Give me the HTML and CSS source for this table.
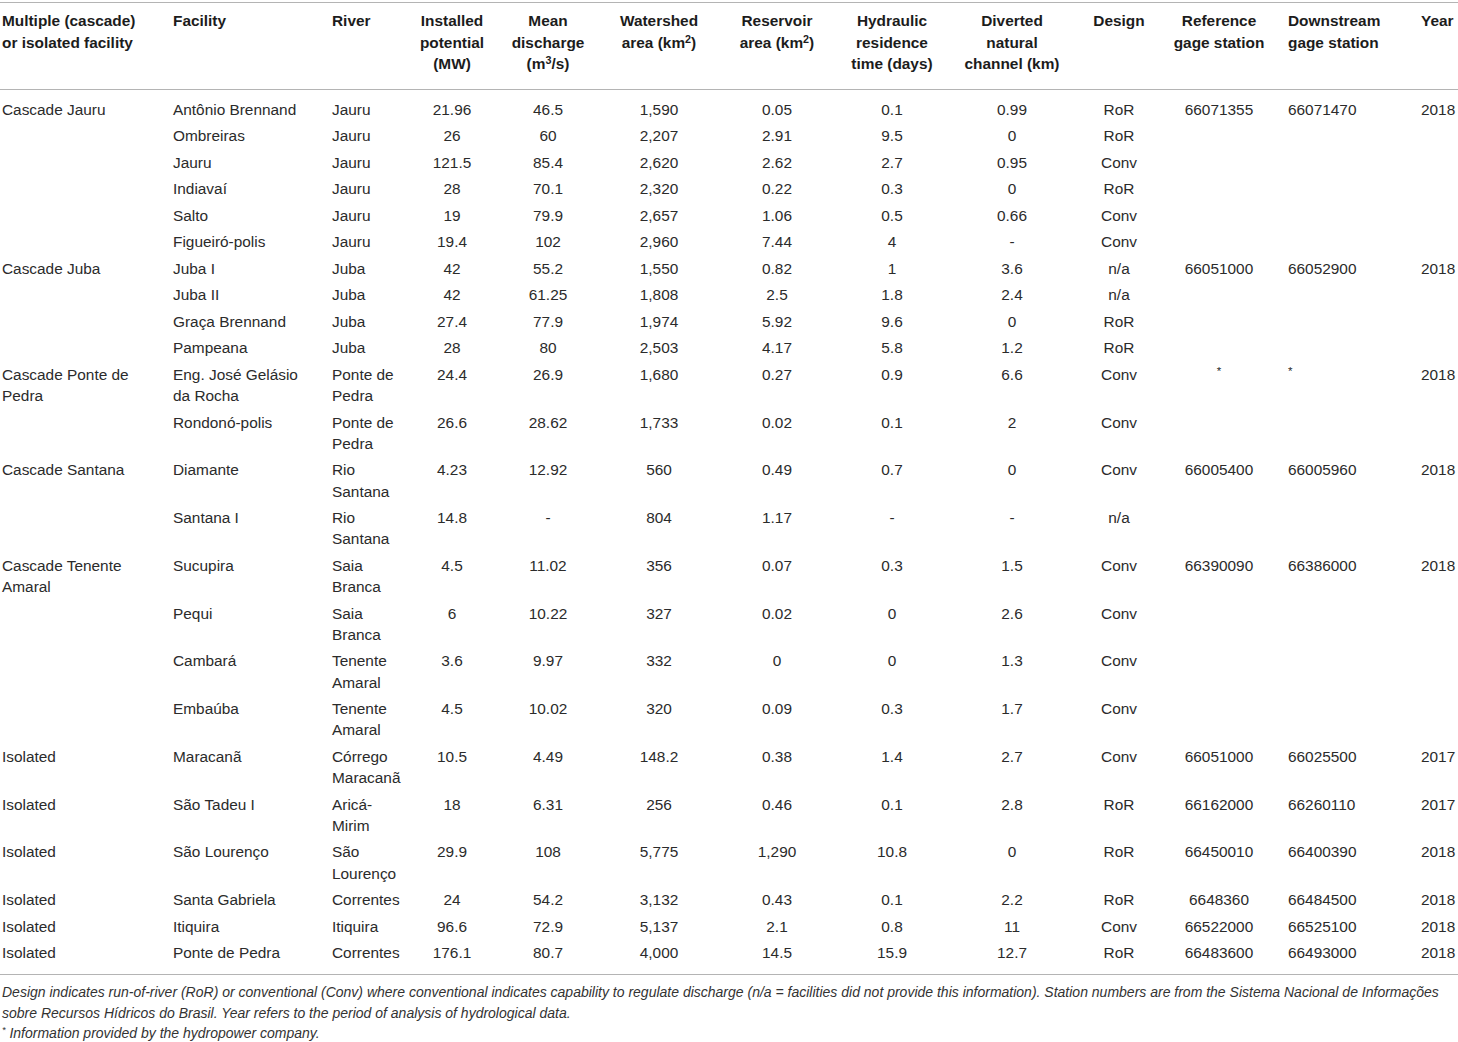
FILE: index.html
```html
<!DOCTYPE html>
<html lang="en">
<head>
<meta charset="utf-8">
<title>Hydropower facilities</title>
<link rel="stylesheet" href="styles.css">
</head>
<body>
<table class="data">
  <colgroup>
    <col class="c1"><col class="c2"><col class="c3"><col class="c4"><col class="c5"><col class="c6"><col class="c7"><col class="c8"><col class="c9"><col class="c10"><col class="c11"><col class="c12"><col class="c13">
  </colgroup>
  <thead>
    <tr>
      <th>Multiple (cascade) or isolated facility</th>
      <th>Facility</th>
      <th>River</th>
      <th>Installed potential (MW)</th>
      <th>Mean discharge (m<sup>3</sup>/s)</th>
      <th>Watershed area (km<sup>2</sup>)</th>
      <th>Reservoir area (km<sup>2</sup>)</th>
      <th>Hydraulic residence time (days)</th>
      <th>Diverted natural channel (km)</th>
      <th>Design</th>
      <th>Reference gage station</th>
      <th>Downstream gage station</th>
      <th>Year</th>
    </tr>
  </thead>
  <tbody>
    <tr class="first"><td>Cascade Jauru</td><td>Antônio Brennand</td><td>Jauru</td><td>21.96</td><td>46.5</td><td>1,590</td><td>0.05</td><td>0.1</td><td>0.99</td><td>RoR</td><td>66071355</td><td>66071470</td><td>2018</td></tr>
    <tr><td></td><td>Ombreiras</td><td>Jauru</td><td>26</td><td>60</td><td>2,207</td><td>2.91</td><td>9.5</td><td>0</td><td>RoR</td><td></td><td></td><td></td></tr>
    <tr><td></td><td>Jauru</td><td>Jauru</td><td>121.5</td><td>85.4</td><td>2,620</td><td>2.62</td><td>2.7</td><td>0.95</td><td>Conv</td><td></td><td></td><td></td></tr>
    <tr><td></td><td>Indiavaí</td><td>Jauru</td><td>28</td><td>70.1</td><td>2,320</td><td>0.22</td><td>0.3</td><td>0</td><td>RoR</td><td></td><td></td><td></td></tr>
    <tr><td></td><td>Salto</td><td>Jauru</td><td>19</td><td>79.9</td><td>2,657</td><td>1.06</td><td>0.5</td><td>0.66</td><td>Conv</td><td></td><td></td><td></td></tr>
    <tr><td></td><td>Figueiró-polis</td><td>Jauru</td><td>19.4</td><td>102</td><td>2,960</td><td>7.44</td><td>4</td><td>-</td><td>Conv</td><td></td><td></td><td></td></tr>
    <tr><td>Cascade Juba</td><td>Juba I</td><td>Juba</td><td>42</td><td>55.2</td><td>1,550</td><td>0.82</td><td>1</td><td>3.6</td><td>n/a</td><td>66051000</td><td>66052900</td><td>2018</td></tr>
    <tr><td></td><td>Juba II</td><td>Juba</td><td>42</td><td>61.25</td><td>1,808</td><td>2.5</td><td>1.8</td><td>2.4</td><td>n/a</td><td></td><td></td><td></td></tr>
    <tr><td></td><td>Graça Brennand</td><td>Juba</td><td>27.4</td><td>77.9</td><td>1,974</td><td>5.92</td><td>9.6</td><td>0</td><td>RoR</td><td></td><td></td><td></td></tr>
    <tr><td></td><td>Pampeana</td><td>Juba</td><td>28</td><td>80</td><td>2,503</td><td>4.17</td><td>5.8</td><td>1.2</td><td>RoR</td><td></td><td></td><td></td></tr>
    <tr><td>Cascade Ponte de Pedra</td><td>Eng. José Gelásio da Rocha</td><td>Ponte de Pedra</td><td>24.4</td><td>26.9</td><td>1,680</td><td>0.27</td><td>0.9</td><td>6.6</td><td>Conv</td><td><sup>*</sup></td><td><sup>*</sup></td><td>2018</td></tr>
    <tr><td></td><td>Rondonó-polis</td><td>Ponte de Pedra</td><td>26.6</td><td>28.62</td><td>1,733</td><td>0.02</td><td>0.1</td><td>2</td><td>Conv</td><td></td><td></td><td></td></tr>
    <tr><td>Cascade Santana</td><td>Diamante</td><td>Rio Santana</td><td>4.23</td><td>12.92</td><td>560</td><td>0.49</td><td>0.7</td><td>0</td><td>Conv</td><td>66005400</td><td>66005960</td><td>2018</td></tr>
    <tr><td></td><td>Santana I</td><td>Rio Santana</td><td>14.8</td><td>-</td><td>804</td><td>1.17</td><td>-</td><td>-</td><td>n/a</td><td></td><td></td><td></td></tr>
    <tr><td>Cascade Tenente Amaral</td><td>Sucupira</td><td>Saia Branca</td><td>4.5</td><td>11.02</td><td>356</td><td>0.07</td><td>0.3</td><td>1.5</td><td>Conv</td><td>66390090</td><td>66386000</td><td>2018</td></tr>
    <tr><td></td><td>Pequi</td><td>Saia Branca</td><td>6</td><td>10.22</td><td>327</td><td>0.02</td><td>0</td><td>2.6</td><td>Conv</td><td></td><td></td><td></td></tr>
    <tr><td></td><td>Cambará</td><td>Tenente Amaral</td><td>3.6</td><td>9.97</td><td>332</td><td>0</td><td>0</td><td>1.3</td><td>Conv</td><td></td><td></td><td></td></tr>
    <tr><td></td><td>Embaúba</td><td>Tenente Amaral</td><td>4.5</td><td>10.02</td><td>320</td><td>0.09</td><td>0.3</td><td>1.7</td><td>Conv</td><td></td><td></td><td></td></tr>
    <tr><td>Isolated</td><td>Maracanã</td><td>Córrego Maracanã</td><td>10.5</td><td>4.49</td><td>148.2</td><td>0.38</td><td>1.4</td><td>2.7</td><td>Conv</td><td>66051000</td><td>66025500</td><td>2017</td></tr>
    <tr><td>Isolated</td><td>São Tadeu I</td><td>Aricá-Mirim</td><td>18</td><td>6.31</td><td>256</td><td>0.46</td><td>0.1</td><td>2.8</td><td>RoR</td><td>66162000</td><td>66260110</td><td>2017</td></tr>
    <tr><td>Isolated</td><td>São Lourenço</td><td>São Lourenço</td><td>29.9</td><td>108</td><td>5,775</td><td>1,290</td><td>10.8</td><td>0</td><td>RoR</td><td>66450010</td><td>66400390</td><td>2018</td></tr>
    <tr><td>Isolated</td><td>Santa Gabriela</td><td>Correntes</td><td>24</td><td>54.2</td><td>3,132</td><td>0.43</td><td>0.1</td><td>2.2</td><td>RoR</td><td>6648360</td><td>66484500</td><td>2018</td></tr>
    <tr><td>Isolated</td><td>Itiquira</td><td>Itiquira</td><td>96.6</td><td>72.9</td><td>5,137</td><td>2.1</td><td>0.8</td><td>11</td><td>Conv</td><td>66522000</td><td>66525100</td><td>2018</td></tr>
    <tr class="last"><td>Isolated</td><td>Ponte de Pedra</td><td>Correntes</td><td>176.1</td><td>80.7</td><td>4,000</td><td>14.5</td><td>15.9</td><td>12.7</td><td>RoR</td><td>66483600</td><td>66493000</td><td>2018</td></tr>
  </tbody>
</table>
<div class="notes">
  <p class="note">Design indicates run-of-river (RoR) or conventional (Conv) where conventional indicates capability to regulate discharge (n/a = facilities did not provide this information). Station numbers are from the Sistema Nacional de Informações sobre Recursos Hídricos do Brasil. Year refers to the period of analysis of hydrological data.</p>
  <p class="note"><sup>*</sup> Information provided by the hydropower company.</p>
</div>
</body>
</html>
```

FILE: styles.css
```css
html, body {
  margin: 0;
  padding: 0;
  background: #ffffff;
}

body {
  font-family: "Liberation Sans", Arial, Helvetica, sans-serif;
  color: #2b2b2b;
}

.data {
  width: 1458px;
  table-layout: fixed;
  border-collapse: collapse;
  margin-top: 2px;
  font-size: 15.4px;
}

.c1 { width: 165px; }
.c2 { width: 159px; }
.c3 { width: 88px; }
.c4 { width: 80px; }
.c5 { width: 112px; }
.c6 { width: 110px; }
.c7 { width: 126px; }
.c8 { width: 104px; }
.c9 { width: 136px; }
.c10 { width: 78px; }
.c11 { width: 122px; }
.c12 { width: 131px; }
.c13 { width: 47px; }

.data th,
.data td {
  vertical-align: top;
  padding: 2.625px 8px;
  line-height: 21.25px;
  text-align: center;
}

.data thead tr {
  border-top: 1px solid #b4b4b4;
  border-bottom: 1px solid #b4b4b4;
}

.data th {
  font-weight: bold;
  color: #1c1c1c;
  padding-top: 7px;
  padding-bottom: 14px;
  line-height: 21.5px;
}

.data th:nth-child(1), .data td:nth-child(1) { text-align: left; padding-left: 2px; padding-right: 14px; }
.data th:nth-child(2), .data td:nth-child(2) { text-align: left; padding-right: 16px; }
.data th:nth-child(3), .data td:nth-child(3) { text-align: left; }
.data th:nth-child(4), .data td:nth-child(4) { padding-left: 4px; padding-right: 4px; }
.data th:nth-child(7), .data td:nth-child(7) { padding-left: 14px; padding-right: 14px; }
.data th:nth-child(9), .data td:nth-child(9) { padding-left: 16px; padding-right: 16px; }
.data th:nth-child(12), .data td:nth-child(12) { text-align: left; }
.data th:nth-child(13), .data td:nth-child(13) { text-align: left; padding-left: 10px; padding-right: 0; }

.data sup {
  font-size: 0.7em;
  line-height: 0;
  vertical-align: 0.45em;
}

.data td sup {
  font-size: 0.75em;
  vertical-align: 0.4em;
}

.data tr.first td { padding-top: 9.4px; }
.data tr.last td { padding-bottom: 10.5px; }
.data tbody tr.last { border-bottom: 1px solid #b4b4b4; }

.notes {
  padding: 7px 0 0 2px;
}

.note {
  margin: 0;
  font-style: italic;
  font-size: 14px;
  line-height: 20.8px;
  color: #333333;
}

.note sup {
  font-size: 0.65em;
  line-height: 0;
  vertical-align: 0.5em;
}
```
